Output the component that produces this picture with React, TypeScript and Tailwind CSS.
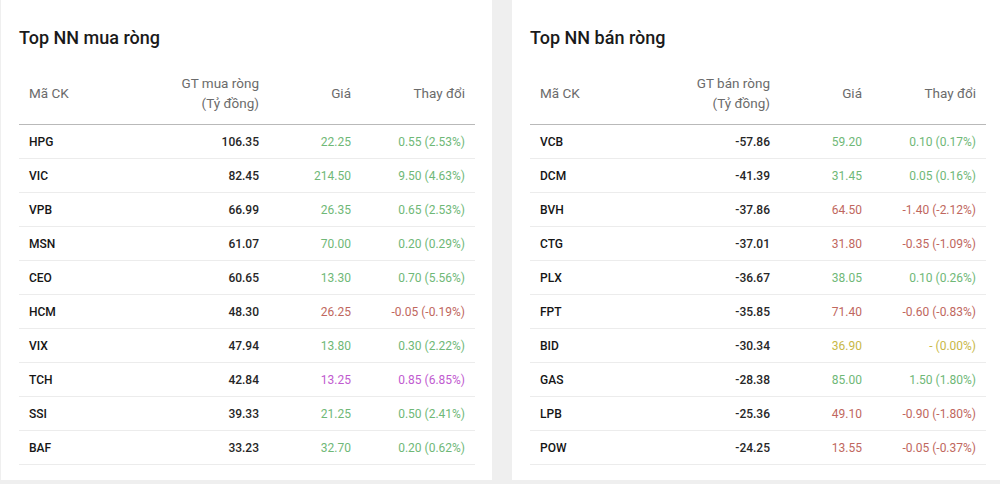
import React from 'react';

type Tone = 'up' | 'down' | 'ceil' | 'ref';

type Row = {
  code: string;
  value: string;
  price: string;
  change: string;
  tone: Tone;
};

const toneClass: Record<Tone, string> = {
  up: 'text-[#6fb877]',
  down: 'text-[#c0675e]',
  ceil: 'text-[#c15bd0]',
  ref: 'text-[#c8b847]',
};

const buys: Row[] = [
  { code: 'HPG', value: '106.35', price: '22.25', change: '0.55 (2.53%)', tone: 'up' },
  { code: 'VIC', value: '82.45', price: '214.50', change: '9.50 (4.63%)', tone: 'up' },
  { code: 'VPB', value: '66.99', price: '26.35', change: '0.65 (2.53%)', tone: 'up' },
  { code: 'MSN', value: '61.07', price: '70.00', change: '0.20 (0.29%)', tone: 'up' },
  { code: 'CEO', value: '60.65', price: '13.30', change: '0.70 (5.56%)', tone: 'up' },
  { code: 'HCM', value: '48.30', price: '26.25', change: '-0.05 (-0.19%)', tone: 'down' },
  { code: 'VIX', value: '47.94', price: '13.80', change: '0.30 (2.22%)', tone: 'up' },
  { code: 'TCH', value: '42.84', price: '13.25', change: '0.85 (6.85%)', tone: 'ceil' },
  { code: 'SSI', value: '39.33', price: '21.25', change: '0.50 (2.41%)', tone: 'up' },
  { code: 'BAF', value: '33.23', price: '32.70', change: '0.20 (0.62%)', tone: 'up' },
];

const sells: Row[] = [
  { code: 'VCB', value: '-57.86', price: '59.20', change: '0.10 (0.17%)', tone: 'up' },
  { code: 'DCM', value: '-41.39', price: '31.45', change: '0.05 (0.16%)', tone: 'up' },
  { code: 'BVH', value: '-37.86', price: '64.50', change: '-1.40 (-2.12%)', tone: 'down' },
  { code: 'CTG', value: '-37.01', price: '31.80', change: '-0.35 (-1.09%)', tone: 'down' },
  { code: 'PLX', value: '-36.67', price: '38.05', change: '0.10 (0.26%)', tone: 'up' },
  { code: 'FPT', value: '-35.85', price: '71.40', change: '-0.60 (-0.83%)', tone: 'down' },
  { code: 'BID', value: '-30.34', price: '36.90', change: '- (0.00%)', tone: 'ref' },
  { code: 'GAS', value: '-28.38', price: '85.00', change: '1.50 (1.80%)', tone: 'up' },
  { code: 'LPB', value: '-25.36', price: '49.10', change: '-0.90 (-1.80%)', tone: 'down' },
  { code: 'POW', value: '-24.25', price: '13.55', change: '-0.05 (-0.37%)', tone: 'down' },
];

function Panel({ title, valueLabel, rows }: { title: string; valueLabel: string; rows: Row[] }) {
  return (
    <div className="w-[491px] shrink-0 h-[480px] bg-white pt-[26px] pl-[18px] pr-[17px]">
      <h2 className="text-[18px] leading-[24px] font-medium text-[#1a1a1a]">{title}</h2>

      <div className="mt-[12px] grid grid-cols-[120px_130px_92px_114px] border-b border-[#b9b9b9] py-[11px] text-[13.5px] leading-[20px] text-[#6b6b6b]">
        <div className="flex items-center px-[10px]">Mã CK</div>
        <div className="px-[10px] text-right">
          {valueLabel}
          <br />
          (Tỷ đồng)
        </div>
        <div className="flex items-center justify-end px-[10px]">Giá</div>
        <div className="flex items-center justify-end px-[10px]">Thay đổi</div>
      </div>

      {rows.map((r) => (
        <div
          key={r.code}
          className="grid h-[34px] grid-cols-[120px_130px_92px_114px] items-center border-b border-[#ececec] text-[12px]"
        >
          <div className="px-[10px] font-medium text-[#151515]">{r.code}</div>
          <div className="px-[10px] text-right font-medium text-[#262626]">{r.value}</div>
          <div className={`px-[10px] text-right ${toneClass[r.tone]}`}>{r.price}</div>
          <div className={`px-[10px] text-right ${toneClass[r.tone]}`}>{r.change}</div>
        </div>
      ))}
    </div>
  );
}

export default function App() {
  return (
    <div className="h-[484px] w-[1000px] overflow-hidden bg-[#efefef] font-['Roboto','Liberation_Sans',sans-serif]">
      <div className="flex gap-[20px] pl-[1px]">
        <Panel title="Top NN mua ròng" valueLabel="GT mua ròng" rows={buys} />
        <Panel title="Top NN bán ròng" valueLabel="GT bán ròng" rows={sells} />
      </div>
    </div>
  );
}
